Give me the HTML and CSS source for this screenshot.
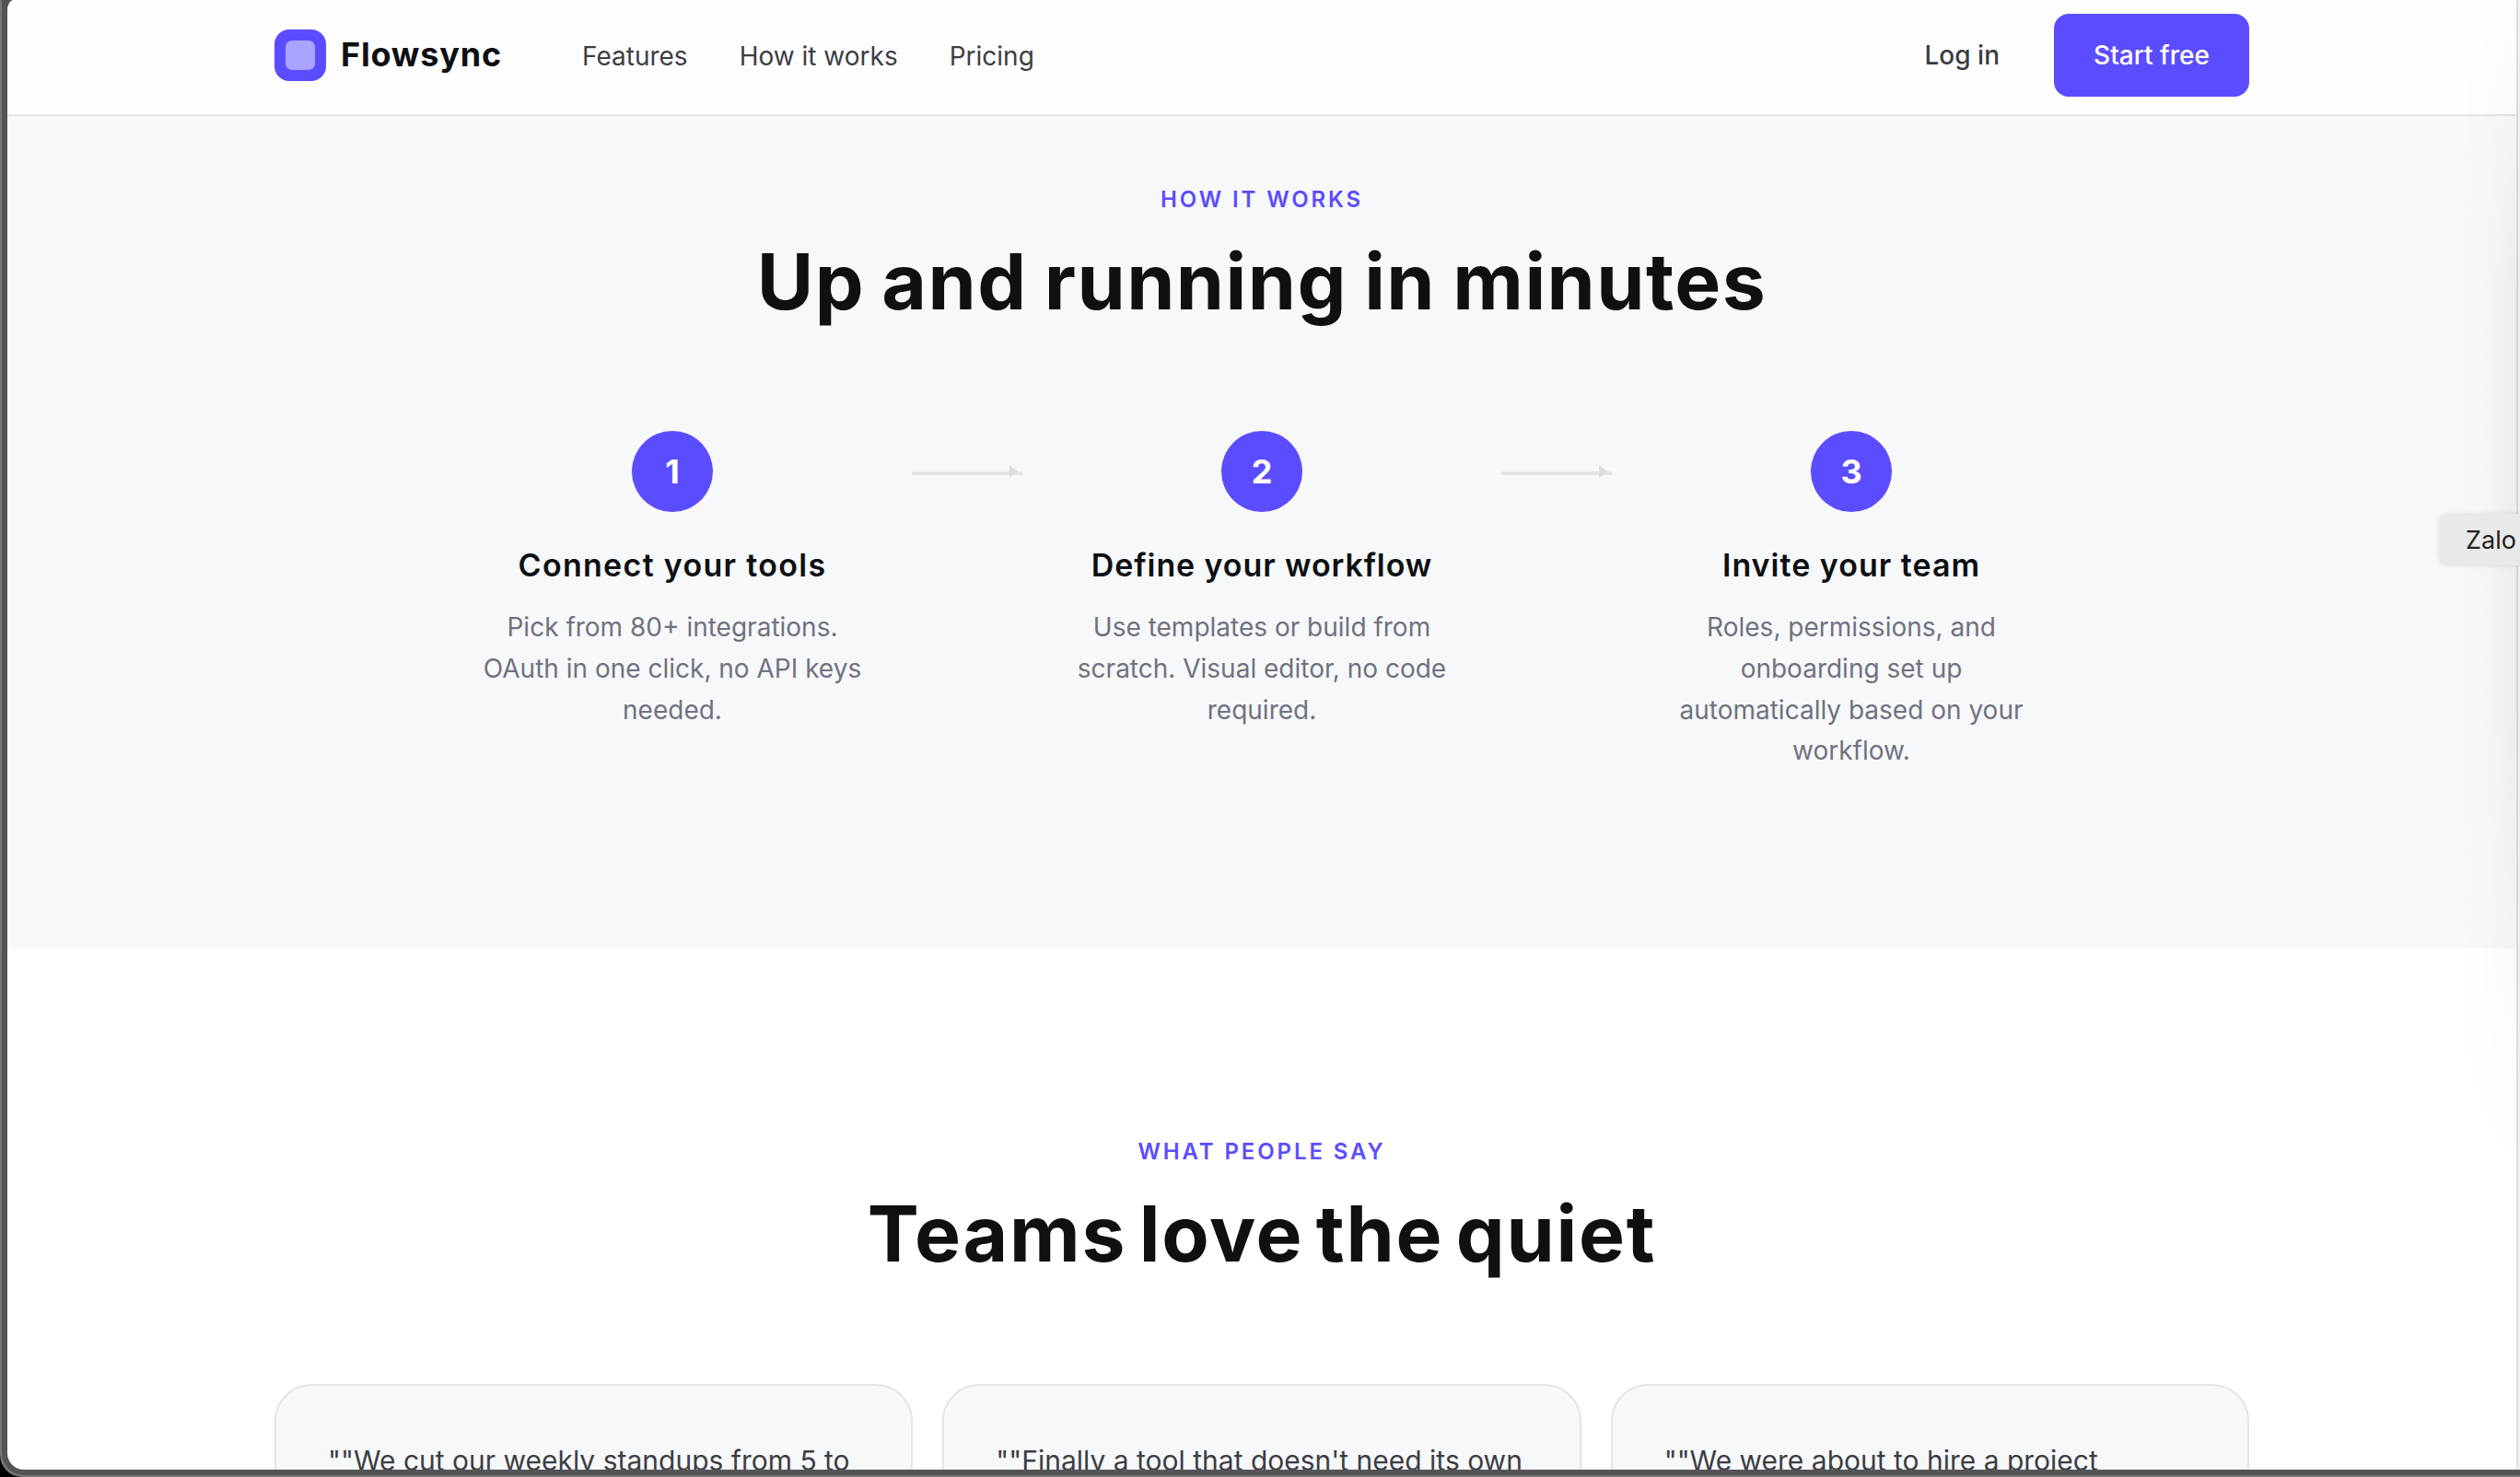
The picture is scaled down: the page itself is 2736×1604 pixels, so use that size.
FILE: index.html
```html
<!DOCTYPE html>
<html lang="en">
<head>
    <meta charset="UTF-8">
    <meta name="viewport" content="width=device-width, initial-scale=1.0">
    <title>Flowsync</title>
    <link rel="stylesheet" href="styles.css">
</head>
<body>

<div class="frame">
    <div class="window">
        <nav class="nav">
            <div class="nav-inner">
                <a href="#" class="logo"><span class="logo-mark"></span><span class="logo-text">Flowsync</span></a>
                <div class="nav-links">
                    <a href="#features">Features</a>
                    <a href="#how">How it works</a>
                    <a href="#pricing">Pricing</a>
                </div>
                <div class="nav-actions">
                    <a href="#login" class="login">Log in</a>
                    <a href="#start" class="btn">Start free</a>
                </div>
            </div>
        </nav>

        <section id="how" class="section how">
            <p class="eyebrow">How it works</p>
            <h2 class="title">Up and running in minutes</h2>
            <div class="steps">
                <div class="step">
                    <div class="step-num">1</div>
                    <h3 class="step-connect">Connect your tools</h3>
                    <p>Pick from 80+ integrations. OAuth in one click, no API keys needed.</p>
                </div>
                <div class="step">
                    <div class="step-num">2</div>
                    <h3 class="step-define">Define your workflow</h3>
                    <p>Use templates or build from scratch. Visual editor, no code required.</p>
                </div>
                <div class="step">
                    <div class="step-num">3</div>
                    <h3 class="step-invite">Invite your team</h3>
                    <p>Roles, permissions, and onboarding set up automatically based on your workflow.</p>
                </div>
            </div>
        </section>

        <section class="section people">
            <p class="eyebrow">What people say</p>
            <h2 class="title">Teams love the quiet</h2>
            <div class="cards">
                <div class="card">""We cut our weekly standups from 5 to</div>
                <div class="card">""Finally a tool that doesn't need its own</div>
                <div class="card">""We were about to hire a project</div>
            </div>
        </section>
    </div>
</div>

<div class="edge-shade"></div>
<div class="tooltip">Zalo</div>

</body>
</html>
```

FILE: styles.css
```css
* {
    box-sizing: border-box;
}

body {
    margin: 0;
    height: 1604px;
    overflow: hidden;
    background: #000;
    font-family: Inter, sans-serif;
    color: #0e1012;
}

h2, h3, p {
    margin: 0;
}

a {
    color: inherit;
    text-decoration: none;
}

/* browser window */
.frame {
    height: 1604px;
    padding: 0 2px 8px 8px;
    background: #545457 linear-gradient(#f0f0f2, #f0f0f2) right top / 2px 1596px no-repeat;
    border-radius: 0 0 0 24px;
    box-shadow: inset 2px -2px 0 #777578;
}

.window {
    height: 1596px;
    overflow: hidden;
    background: #fff;
    border-right: 2px solid #dfe0e2;
    border-radius: 7px 0 0 18px / 12px 0 0 18px;
}

.nav {
    height: 126px;
    background: #fefefe;
    border-bottom: 2px solid #e5e5e7;
}

.nav-inner {
    display: flex;
    align-items: center;
    width: 2144px;
    height: 120px;
    margin: 0 auto;
}

.logo {
    display: flex;
    align-items: center;
    gap: 16px;
    width: 334px;
}

.logo-mark {
    display: grid;
    place-items: center;
    width: 56px;
    height: 56px;
    border-radius: 16px;
    background: #5b4dff;
}

.logo-mark::before {
    content: "";
    width: 32px;
    height: 32px;
    border-radius: 7px;
    background: #aaa3ff;
}

.logo-text {
    padding-bottom: 2px;
    font-size: 36px;
    font-weight: 700;
    letter-spacing: 0.8px;
}

.nav-links {
    display: flex;
    gap: 56px;
    font-size: 28px;
    color: #3c3e44;
    padding-top: 2px;
}

.nav-actions {
    display: flex;
    align-items: center;
    gap: 59px;
    margin-left: auto;
    font-size: 28px;
    font-weight: 500;
    color: #3a3c42;
}

.btn {
    width: 212px;
    height: 90px;
    border-radius: 16px;
    background: #5b4dff;
    color: #fff;
    line-height: 90px;
    text-align: center;
}

.section {
    text-align: center;
}

.how {
    padding: 71px 0 192px;
    background: #f7f8fa;
}

.people {
    padding-top: 201px;
}

.eyebrow {
    font-size: 24px;
    font-weight: 600;
    line-height: 40px;
    letter-spacing: 0.12em;
    text-transform: uppercase;
    color: #5b4dff;
}

.title {
    margin-top: 21px;
    font-size: 84px;
    font-weight: 700;
    line-height: 96px;
    letter-spacing: 1.4px;
    word-spacing: -3px;
}

.people .title {
    letter-spacing: 1.7px;
    word-spacing: -8px;
}

.steps {
    display: grid;
    grid-template-columns: repeat(3, 1fr);
    width: 1920px;
    margin: 114px auto 0;
}

.step {
    position: relative;
    padding: 0 110px;
}

/* connector to the next step */
.step:not(:last-child)::before {
    content: "";
    position: absolute;
    top: 44px;
    right: -60px;
    width: 120px;
    height: 4px;
    background: #e4e5e7;
}

.step:not(:last-child)::after {
    content: "";
    position: absolute;
    top: 37px;
    right: -55px;
    border-left: 9px solid #dcdde0;
    border-top: 7px solid transparent;
    border-bottom: 7px solid transparent;
}

.step-num {
    width: 88px;
    height: 88px;
    margin: 0 auto;
    border-radius: 50%;
    background: #5b4dff;
    color: #fff;
    font-size: 36px;
    font-weight: 700;
    line-height: 88px;
}

.step h3 {
    margin-top: 38px;
    font-size: 34px;
    font-weight: 600;
    line-height: 40px;
    white-space: nowrap;
}

.step .step-connect {
    letter-spacing: 1.3px;
}

.step .step-define {
    letter-spacing: 0.9px;
}

.step .step-invite {
    letter-spacing: 1px;
}

.step p {
    margin-top: 25px;
    font-size: 28px;
    line-height: 44.8px;
    color: #6f7280;
}

.cards {
    display: grid;
    grid-template-columns: repeat(3, 1fr);
    gap: 32px;
    width: 2144px;
    margin: 115px auto 0;
    text-align: left;
}

.card {
    height: 400px;
    padding: 56px;
    border: 2px solid #e4e5e6;
    border-radius: 40px;
    background: #f7f8fa;
    color: #3c3e44;
    font-size: 30px;
    line-height: 51px;
    white-space: nowrap;
}

/* shadow falling on the right side of the window */
.edge-shade {
    position: absolute;
    top: 0;
    right: 2px;
    width: 66px;
    height: 1270px;
    background: linear-gradient(to right, rgba(40, 40, 50, 0), rgba(40, 40, 50, 0.015) 50%, rgba(40, 40, 50, 0.055));
    -webkit-mask-image: linear-gradient(transparent, #000 25%, #000 60%, transparent);
    mask-image: linear-gradient(transparent, #000 25%, #000 60%, transparent);
}

.tooltip {
    position: absolute;
    top: 558px;
    right: 0;
    width: 88px;
    height: 56px;
    padding-left: 29px;
    border-radius: 10px 0 0 10px;
    background: #e9e9e9;
    box-shadow: 0 0 5px rgba(0, 0, 0, 0.12);
    color: #222;
    font-size: 27px;
    line-height: 57px;
}
```
